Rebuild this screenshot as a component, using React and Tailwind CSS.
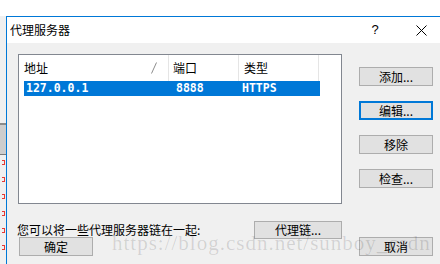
import React from 'react'

const cjk = { fontFamily: '"Noto Sans CJK SC", "Noto Sans", sans-serif' }

const Btn = ({ children, focused = false, className = '' }) => (
  <div
    className={`flex items-center justify-center bg-[#e1e1e1] text-[12px] leading-none text-black ${
      focused ? 'border-2 border-[#0078d7]' : 'border border-[#adadad]'
    } ${className}`}
  >
    {children}
  </div>
)

export default function App() {
  return (
    <div className="relative w-[440px] h-[264px] overflow-hidden bg-white flex flex-col" style={cjk}>
      <div className="h-[16px] shrink-0 bg-white" />

      <div className="flex flex-1">
        {/* window behind, left edge */}
        <div className="w-[6px] shrink-0 bg-[#f0f0f0] flex flex-col">
          <div className="h-[107px]" />
          <div className="h-[2px] bg-[#8a8a8a]" />
          <div className="h-[29px] bg-[#cdcdcd]" />
          <div className="h-px bg-[#7a7a7a]" />
          <div className="flex flex-col gap-[12px] pt-[5px] pl-[2px]">
            <div className="w-[3px] h-[5px] border-r border-t border-b border-[#e53935]" />
            <div className="w-[3px] h-[5px] border-r border-t border-b border-[#e53935]" />
            <div className="w-[3px] h-[5px] border-r border-t border-b border-[#e53935]" />
            <div className="w-[3px] h-[5px] border-r border-t border-b border-[#e53935]" />
            <div className="w-[3px] h-[5px] border-r border-t border-b border-[#e53935]" />
            <div className="w-[3px] h-[5px] border-r border-t border-b border-[#e53935]" />
          </div>
        </div>

        {/* dialog */}
        <div className="w-[438px] shrink-0 flex flex-col border-l border-t border-[#0078d7]">
          {/* title bar */}
          <div className="h-[26px] shrink-0 bg-white flex items-center">
            <span className="pl-[3px] text-[12px] leading-none text-black">代理服务器</span>
            <div className="ml-auto flex h-full">
              <div className="w-[46px] flex items-center justify-center text-[13px] text-black" style={{ fontFamily: '"Liberation Sans", sans-serif' }}>
                ?
              </div>
              <div className="w-[46px] flex items-center justify-center">
                <svg width="11" height="11" viewBox="0 0 11 11">
                  <path d="M0.5 0.5 L10.5 10.5 M10.5 0.5 L0.5 10.5" stroke="#000" strokeWidth="1" fill="none" />
                </svg>
              </div>
            </div>
          </div>

          {/* body */}
          <div className="flex-1 bg-[#f0f0f0] pl-[11px] pt-[11px]">
            <div className="flex">
              {/* list view */}
              <div className="w-[324px] h-[150px] shrink-0 border border-[#828790] bg-white flex flex-col">
                <div className="h-[26px] flex text-[12px] leading-none text-black">
                  <div className="w-[150px] flex items-center justify-between pl-[5px] pr-[11px] border-r border-[#e5e5e5]">
                    <span>地址</span>
                    <svg width="6" height="12" viewBox="0 0 6 12">
                      <path d="M5.5 0.5 L0.5 11.5" stroke="#8c8c8c" strokeWidth="1" fill="none" />
                    </svg>
                  </div>
                  <div className="w-[70px] flex items-center pl-[4px] border-r border-[#e5e5e5]">端口</div>
                  <div className="w-[80px] flex items-center pl-[5px] border-r border-[#e5e5e5]">类型</div>
                </div>
                <div
                  className="ml-[5px] w-[296px] h-[15px] bg-[#0078d7] flex items-center text-white font-bold text-[11.5px] leading-none"
                  style={{ fontFamily: '"DejaVu Sans Mono", "Liberation Mono", monospace' }}
                >
                  <span className="w-[146px] pl-[2px]">127.0.0.1</span>
                  <span className="w-[70px] pl-[6px]">8888</span>
                  <span className="pl-[2px]">HTTPS</span>
                </div>
              </div>

              {/* side buttons */}
              <div className="ml-[17px] pt-[13px] flex flex-col gap-[15px]">
                <Btn className="w-[74px] h-[19px]">添加...</Btn>
                <Btn focused className="w-[74px] h-[19px]">编辑...</Btn>
                <Btn className="w-[74px] h-[19px]">移除</Btn>
                <Btn className="w-[74px] h-[19px]">检查...</Btn>
              </div>
            </div>

            <div className="mt-[17px] w-[324px] h-[18px] flex items-center justify-between">
              <span className="-ml-px text-[12px] leading-none text-black">您可以将一些代理服务器链在一起:</span>
              <Btn className="w-[88px] h-[18px]">代理链...</Btn>
            </div>

            <div className="-mt-[2px] ml-px w-[414px] flex justify-between">
              <Btn className="w-[74px] h-[19px]">确定</Btn>
              <Btn className="w-[74px] h-[19px]">取消</Btn>
            </div>
          </div>
        </div>
      </div>

      {/* watermark overlay */}
      <div
        className="absolute left-[112px] top-[233px] text-[21px] leading-none tracking-[1px] text-black/[0.13] pointer-events-none whitespace-nowrap"
        style={{ fontFamily: '"Liberation Serif", serif' }}
      >
        https://blog.csdn.net/sunboy_csdn
      </div>
    </div>
  )
}
